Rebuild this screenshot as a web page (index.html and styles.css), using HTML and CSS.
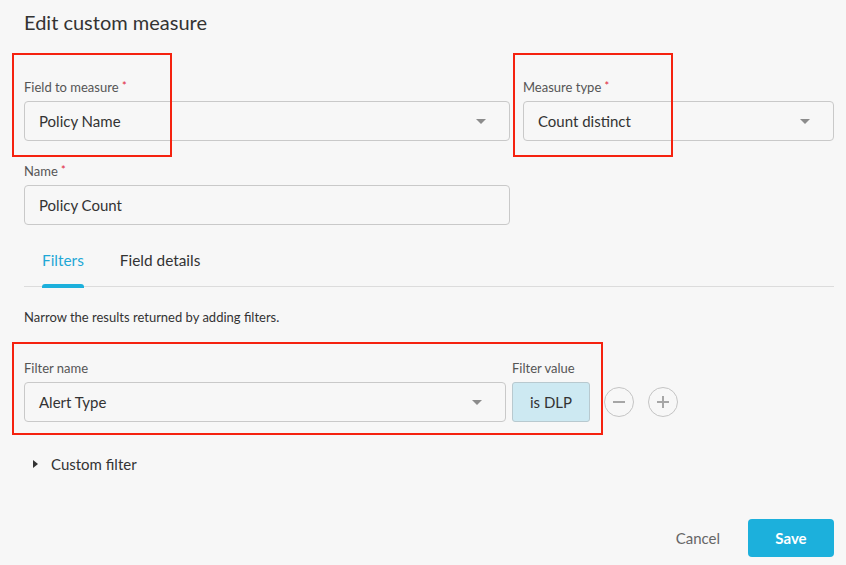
FILE: index.html
```html
<!DOCTYPE html>
<html>
<head>
<meta charset="utf-8">
<link rel="stylesheet" href="styles.css">
</head>
<body>
<div class="page">
  <h1 class="title">Edit custom measure</h1>

  <div class="grid">
    <div class="field">
      <label class="label">Field to measure <span class="req">*</span></label>
      <div class="select"><span>Policy Name</span><i class="caret"></i></div>
    </div>
    <div class="field">
      <label class="label">Measure type <span class="req">*</span></label>
      <div class="select"><span>Count distinct</span><i class="caret"></i></div>
    </div>
    <div class="field">
      <label class="label">Name <span class="req">*</span></label>
      <div class="input">Policy Count</div>
    </div>
  </div>

  <div class="tabs">
    <div class="tab active">Filters</div>
    <div class="tab">Field details</div>
  </div>

  <p class="desc">Narrow the results returned by adding filters.</p>

  <div class="filter-row">
    <div class="fcol fname">
      <label class="label">Filter name</label>
      <div class="select"><span>Alert Type</span><i class="caret"></i></div>
    </div>
    <div class="fcol">
      <label class="label">Filter value</label>
      <div class="chip">is DLP</div>
    </div>
    <div class="circles">
      <span class="circle">
        <svg width="30" height="30" viewBox="0 0 30 30"><circle cx="15" cy="15" r="14.5" fill="none" stroke="#c4c4c4" stroke-width="1"/><path d="M9 15h12" stroke="#a6a6a6" stroke-width="2"/></svg>
      </span>
      <span class="circle">
        <svg width="30" height="30" viewBox="0 0 30 30"><circle cx="15" cy="15" r="14.5" fill="none" stroke="#c4c4c4" stroke-width="1"/><path d="M9 15h12M15 9v12" stroke="#a6a6a6" stroke-width="2"/></svg>
      </span>
    </div>
  </div>

  <div class="custom"><i class="tri"></i><span>Custom filter</span></div>

  <div class="footer">
    <button class="btn-cancel">Cancel</button>
    <button class="btn-save">Save</button>
  </div>

  <div class="mark mark1"></div>
  <div class="mark mark2"></div>
  <div class="mark mark3"></div>
</div>
</body>
</html>
```

FILE: styles.css
```css
html, body {
  margin: 0;
  padding: 0;
  background: #f7f7f7;
}
body {
  font-family: Lato, "Open Sans", "Liberation Sans", sans-serif;
  color: #333;
}
.page {
  position: relative;
  width: 846px;
  height: 565px;
  box-sizing: border-box;
  padding: 10px 12px 0 24px;
}
.title {
  margin: 0;
  font-size: 20px;
  line-height: 24px;
  font-weight: 400;
  color: #333;
}
.grid {
  margin-top: 45px;
  display: grid;
  grid-template-columns: 486px 1fr;
  column-gap: 13px;
  row-gap: 22px;
}
.field {
  display: flex;
  flex-direction: column;
  gap: 6px;
}
.label {
  display: block;
  font-size: 13px;
  line-height: 16px;
  height: 16px;
  color: #555;
}
.req {
  color: #e0213a;
  font-size: 11px;
  line-height: 0;
  vertical-align: 2px;
}
.select, .input {
  height: 40px;
  box-sizing: border-box;
  border: 1px solid #c9c9c9;
  border-radius: 4px;
  background: #f7f7f7;
  display: flex;
  align-items: center;
  justify-content: space-between;
  padding: 0 23px 0 14px;
  font-size: 15px;
  color: #333;
}
.caret {
  width: 0;
  height: 0;
  border-left: 5px solid transparent;
  border-right: 5px solid transparent;
  border-top: 5px solid #8c8c8c;
}
.tabs {
  margin-top: 16px;
  display: flex;
  border-bottom: 1px solid #dcdcdc;
  height: 46px;
  box-sizing: border-box;
}
.tab {
  position: relative;
  padding: 9px 18px 0;
  font-size: 15.4px;
  line-height: 20px;
  color: #333;
}
.tab.active {
  color: #1fa8d6;
}
.tab.active::after {
  content: "";
  position: absolute;
  left: 18px;
  right: 18px;
  bottom: -2px;
  height: 4px;
  border-radius: 3px 3px 0 0;
  background: #1cb0dc;
}
.desc {
  margin: 22px 0 0;
  font-size: 13px;
  line-height: 16px;
  color: #333;
}
.filter-row {
  margin-top: 35px;
  display: flex;
  align-items: flex-end;
}
.fcol {
  display: flex;
  flex-direction: column;
  gap: 6px;
}
.fname {
  width: 482px;
  margin-right: 6px;
}
.chip {
  width: 78px;
  height: 40px;
  box-sizing: border-box;
  border: 1px solid #b8c9cf;
  border-radius: 3px;
  background: #cde9f2;
  display: flex;
  align-items: center;
  justify-content: center;
  font-size: 15px;
  color: #333;
}
.circles {
  display: flex;
  gap: 14px;
  margin-left: 14px;
  height: 40px;
  align-items: center;
}
.circle {
  display: block;
  width: 30px;
  height: 30px;
}
.circle svg { display: block; }
.custom {
  margin-top: 32px;
  display: flex;
  align-items: center;
  gap: 13px;
  padding-left: 9px;
  font-size: 15px;
  line-height: 20px;
  color: #333;
}
.tri {
  width: 0;
  height: 0;
  border-top: 4px solid transparent;
  border-bottom: 4px solid transparent;
  border-left: 5px solid #333;
}
.footer {
  margin-top: 45px;
  display: flex;
  justify-content: flex-end;
  align-items: center;
}
.btn-cancel {
  border: 0;
  background: none;
  font-family: inherit;
  font-size: 15px;
  color: #666;
  padding: 0;
  margin-right: 28px;
  cursor: pointer;
}
.btn-save {
  width: 86px;
  height: 38px;
  border: 0;
  border-radius: 4px;
  background: #1cb0dc;
  color: #fff;
  font-family: inherit;
  font-size: 15px;
  font-weight: 700;
  cursor: pointer;
}
.mark {
  position: absolute;
  border: 2px solid #f5220f;
  box-sizing: border-box;
  pointer-events: none;
}
.mark1 { left: 12px; top: 53px; width: 160px; height: 104px; }
.mark2 { left: 513px; top: 53px; width: 160px; height: 104px; }
.mark3 { left: 12px; top: 342px; width: 591px; height: 93px; }
```
